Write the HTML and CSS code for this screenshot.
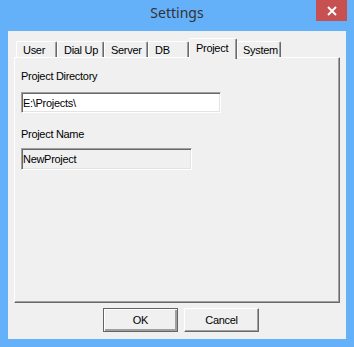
FILE: index.html
```html
<html>
<head>
<meta name="viewport" content="width=device-width, initial-scale=1">
<link rel="stylesheet" href="styles.css">
</head>
<body>
<div class="window">
  <div class="titlebar">
    <span></span>
    <span class="title">Settings</span>
    <span class="close">
      <svg width="10" height="10" viewBox="0 0 10 10">
        <path d="M1 1 L9 9 M9 1 L1 9" stroke="#fff" stroke-width="2"/>
      </svg>
    </span>
  </div>
  <div class="client">
    <div class="tabs">
      <span class="tab t-user">User</span>
      <span class="tab t-dial">Dial Up</span>
      <span class="tab t-server">Server</span>
      <span class="tab t-db">DB</span>
      <span class="tab t-project selected">Project</span>
      <span class="tab t-system">System</span>
    </div>
    <div class="panel">
      <label class="label first" for="dir">Project Directory</label>
      <input id="dir" class="field dir" type="text" value="E:\Projects\">
      <label class="label second" for="name">Project Name</label>
      <input id="name" class="field name" type="text" value="NewProject" readonly>
    </div>
    <div class="buttons">
      <button class="btn default">OK</button>
      <button class="btn">Cancel</button>
    </div>
  </div>
</div>
</body>
</html>
```

FILE: styles.css
```css
body{
  margin:0;
  font-family:"Liberation Sans", Arial, sans-serif;
}
.window{
  width:354px;
  height:347px;
  background:#64b1f9;
  display:flex;
  flex-direction:column;
}
.titlebar{
  height:31px;
  display:grid;
  grid-template-columns:38px 1fr 38px;
}
.title{
  text-align:center;
  font-family:"Noto Sans", sans-serif;
  font-size:14px;
  line-height:19px;
  padding-top:3px;
  color:#333;
}
.close{
  width:31px;
  height:21px;
  background:#c75050;
  display:flex;
  align-items:center;
  justify-content:center;
}
.client{
  flex:1;
  margin:0 8px 8px;
  background:#f0f0f0;
  padding:7px 6px 0;
  font-size:11px;
  letter-spacing:-0.3px;
  color:#000;
}
.tabs{
  display:flex;
  align-items:flex-end;
  height:19px;
  padding-left:2px;
  position:relative;
  z-index:1;
}
.tab{
  box-sizing:border-box;
  height:16px;
  padding:2px 0 0 6px;
  line-height:13px;
  background:#f0f0f0;
  border-top:1px solid #fff;
  border-left:1px solid #fff;
  border-right:1px solid #696969;
  box-shadow:inset -1px 0 #a0a0a0;
  border-radius:2px 2px 0 0;
}
.t-user{ width:41px; }
.t-dial{ width:47px; }
.t-server{ width:44px; }
.t-db{ width:41px; }
.t-project{ width:48px; }
.t-system{ width:44px; padding-left:5px; }
.tab.selected{
  height:21px;
  margin-bottom:-2px;
  padding-top:3px;
}
.panel{
  box-sizing:border-box;
  height:246px;
  border-top:1px solid #fff;
  border-left:1px solid #fff;
  border-right:1px solid #696969;
  border-bottom:1px solid #696969;
  box-shadow:inset -1px -1px #a0a0a0;
  padding:12px 0 0 6px;
  display:flex;
  flex-direction:column;
  align-items:flex-start;
}
.label{
  line-height:13px;
}
.first{ margin-bottom:9px; }
.second{ margin:15px 0 7px; }
.field{
  box-sizing:border-box;
  margin:0;
  padding:0 0 0 1px;
  font-family:"Liberation Sans", Arial, sans-serif;
  font-size:11px;
  letter-spacing:-0.3px;
  color:#000;
  border-top:1px solid #a0a0a0;
  border-left:1px solid #a0a0a0;
  border-right:1px solid #fff;
  border-bottom:1px solid #fff;
  box-shadow:inset 1px 1px #696969, inset -1px -1px #e3e3e3;
  outline:none;
}
.dir{
  width:200px;
  height:21px;
  background:#fff;
}
.name{
  width:171px;
  height:22px;
  background:#f0f0f0;
}
.buttons{
  display:flex;
  gap:6px;
  margin-top:5px;
  padding-left:89px;
}
.btn{
  box-sizing:border-box;
  width:75px;
  height:24px;
  margin:0;
  padding:0;
  font-family:"Liberation Sans", Arial, sans-serif;
  font-size:11px;
  letter-spacing:-0.3px;
  color:#000;
  background:#f0f0f0;
  border-top:1px solid #fff;
  border-left:1px solid #fff;
  border-right:1px solid #696969;
  border-bottom:1px solid #696969;
  box-shadow:inset -1px -1px #a0a0a0;
}
.btn.default{
  border:1px solid #646464;
  box-shadow:inset 1px 1px #fff, inset -2px -2px #a0a0a0;
}
```
